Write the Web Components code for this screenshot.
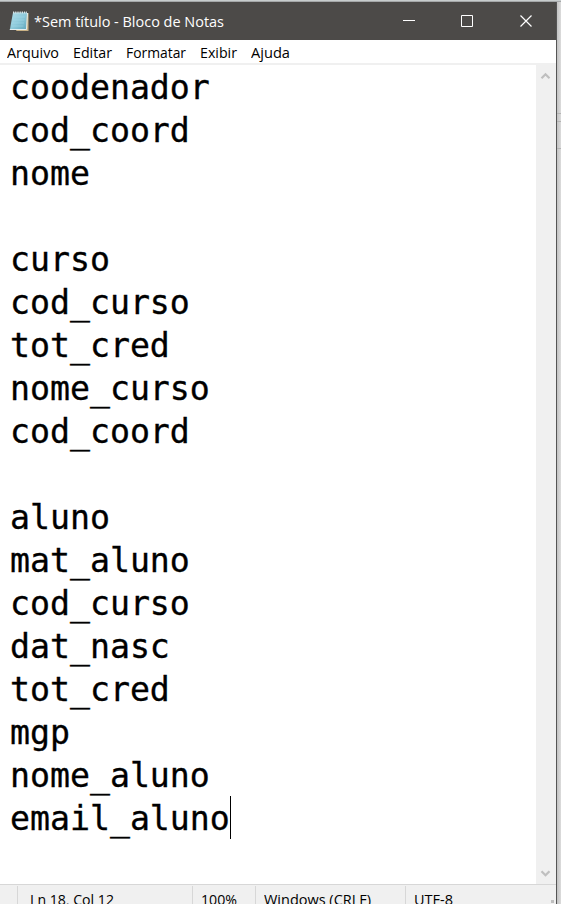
<!DOCTYPE html>
<html lang="pt-BR">
<head>
<meta charset="utf-8">
<title>Bloco de Notas</title>
<style>
html,body{margin:0;height:100%;overflow:hidden}
body{font-family:"Open Sans","Noto Sans",sans-serif;background:#fff}
</style>
</head>
<body>
<notepad-app></notepad-app>
<script>
function define(name, html, setup) {
  const template = document.createElement('template');
  template.innerHTML = html;
  customElements.define(name, class extends HTMLElement {
    connectedCallback() {
      if (this.shadowRoot) return;
      this.attachShadow({mode: 'open'}).append(template.content.cloneNode(true));
      if (setup) setup(this, this.shadowRoot);
    }
  });
}

// A label condensed horizontally so that it takes exactly the given width.
define('fit-label', `<style>
:host{display:block;white-space:nowrap;flex:none}
span{display:inline-block;transform-origin:0 50%}
</style><span><slot></slot></span>`, (el, root) => {
  const w = +el.getAttribute('width');
  const span = root.querySelector('span');
  el.style.width = w + 'px';
  span.style.transform = 'scaleX(' + w / span.getBoundingClientRect().width + ')';
});

define('notepad-icon', `<style>:host{display:block;width:20px;height:22px}svg{display:block}</style>
<svg width="20" height="22" viewBox="0 0 20 22">
<defs><linearGradient id="g" x1="0" y1="0" x2="1" y2="1"><stop offset="0" stop-color="#b4dfea"/><stop offset=".5" stop-color="#8ecadb"/><stop offset="1" stop-color="#5fa5ba"/></linearGradient></defs>
<path d="M17 3h2.500v18H7z" fill="#c9b184"/>
<path d="M4 2.500H18L17 20H.8z" fill="url(#g)"/>
<path d="M.8 19.500H17.500L18.500 3" fill="none" stroke="#e3eef0"/>
<path d="M4 7h12M3.500 10h12M3 13h12M2.500 16h12" stroke="#a5dbe8" stroke-width=".5"/>
<path d="M4 2.500H18" stroke="#d9e4e6" stroke-width="2" stroke-dasharray="1.200 1"/>
</svg>`);

define('title-bar', `<style>
:host{display:flex;height:38px;background:#4c4a48;color:#fff;align-items:center;padding:0 3px 0 9px;box-sizing:border-box}
fit-label{font-size:14.500px;line-height:20px;margin:1px 0 0 5px}
.controls{margin-left:auto;display:flex;height:38px}
svg{display:block}
</style>
<notepad-icon></notepad-icon><fit-label width="190">*Sem título - Bloco de Notas</fit-label>
<div class="controls">
<svg width="58" height="38"><path d="M25 18.500h12" stroke="#fff"/></svg>
<svg width="59" height="38"><path d="M25.500 13.500h11v11h-11z" fill="none" stroke="#fff"/></svg>
<svg width="58" height="38"><path d="M25.500 13.500l11 11m0-11l-11 11" stroke="#fff" stroke-width="1.200"/></svg>
</div>`);

define('menu-bar', `<style>
:host{display:flex;height:23px;background:#fff;color:#000;padding-left:7px;gap:14px;font-size:14.500px;line-height:25px;border-bottom:2px solid #f0f0f0}
</style>
<fit-label width="52">Arquivo</fit-label><fit-label width="39">Editar</fit-label><fit-label width="60">Formatar</fit-label><fit-label width="37">Exibir</fit-label><fit-label width="39">Ajuda</fit-label>`);

define('text-line', `<style>
:host{display:flex;height:43px;line-height:45px;white-space:pre}
i{display:none;width:1px;height:43px;background:#000}
:host([caret]) i{display:block}
</style><slot></slot><i></i>`);

define('text-area', `<style>
:host{display:block;flex:1;min-width:0;overflow:hidden;padding-left:10px;color:#000;font:33.200px "DejaVu Sans Mono",monospace;-webkit-text-stroke:.35px #000}
</style><div></div>`, (el, root) => {
  const lines = ['coodenador','cod_coord','nome','','curso','cod_curso','tot_cred','nome_curso','cod_coord','','aluno','mat_aluno','cod_curso','dat_nasc','tot_cred','mgp','nome_aluno','email_aluno'];
  lines.forEach((text, i) => {
    const line = document.createElement('text-line');
    line.textContent = text;
    if (i === lines.length - 1) line.setAttribute('caret', '');
    root.querySelector('div').append(line);
  });
});

define('scroll-bar', `<style>
:host{display:flex;flex-direction:column;justify-content:space-between;width:20px;background:#f0f0f0}
svg{display:block}
</style>
<svg width="20" height="20"><path d="M5.500 13.200L9.500 9.200l4 4" fill="none" stroke="#bfbfbf" stroke-width="2.200"/></svg>
<svg width="20" height="20"><path d="M5.500 7.300l4 4 4-4" fill="none" stroke="#bfbfbf" stroke-width="2.200"/></svg>`);

define('status-bar', `<style>
:host{display:flex;height:19px;flex:none;overflow:hidden;background:#f0f0f0;border-top:1px solid #d7d7d7;color:#000;font-size:14.500px;line-height:27px}
div{box-sizing:border-box;height:19px;margin-top:1px;border-left:1px solid #d7d7d7}
.lead{width:17px;border:0}.pos{width:175px;padding-left:12px}.zoom{width:63px;padding-left:8px}.eol{width:150px;padding-left:8px}.enc{flex:1;padding-left:8px}
.grip{width:3px;height:3px;background:#bfbfbf;border:0;margin:15px 2px 0 0}
</style>
<div class="lead"></div><div class="pos"><fit-label width="84">Ln 18, Col 12</fit-label></div><div class="zoom"><fit-label width="36">100%</fit-label></div><div class="eol"><fit-label width="107">Windows (CRLF)</fit-label></div><div class="enc"><fit-label width="39">UTF-8</fit-label></div><div class="grip"></div>`);

// The strip of the desktop that shows to the right of the window.
define('desktop-edge', `<style>
:host{display:flex;flex-direction:column;width:4px;background:linear-gradient(90deg,#c2c2c2,#dcdcdc)}
b{display:block;height:1px;background:#b4b4b4}
</style><b style="margin-top:111px"></b><b style="margin-top:7px"></b><b style="margin-top:26px"></b>`);

define('notepad-app', `<style>
:host{display:flex;flex-direction:column;width:561px;height:904px;overflow:hidden}
.top{height:2px;flex:none;background:linear-gradient(#c7cccd 50%,#a5a8a9 50%)}
.row{display:flex;flex:1;min-height:0}
.window{display:flex;flex-direction:column;width:556px;border-right:1px solid #555}
.body{display:flex;flex:1;min-height:0}
</style>
<div class="top"></div><div class="row"><div class="window"><title-bar></title-bar><menu-bar></menu-bar><div class="body"><text-area></text-area><scroll-bar></scroll-bar></div><status-bar></status-bar></div><desktop-edge></desktop-edge></div>`);
</script>
</body>
</html>
